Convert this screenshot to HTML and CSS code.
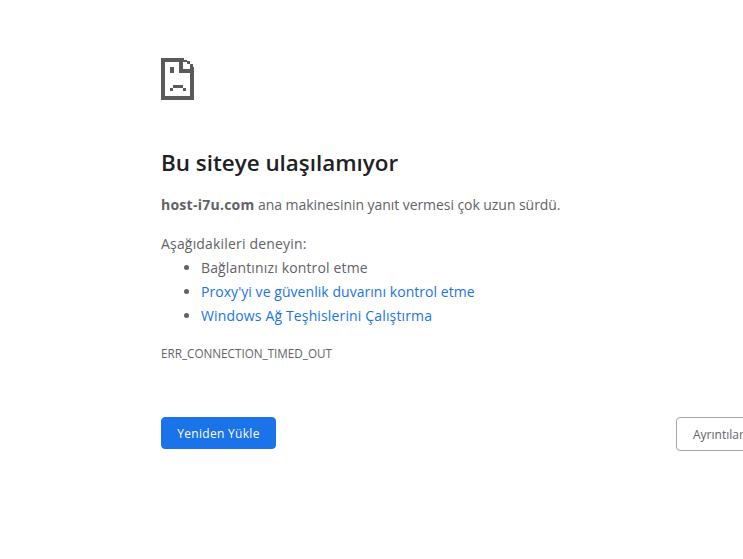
FILE: index.html
```html
<!DOCTYPE html>
<html lang="tr">
<head>
<meta charset="utf-8">
<title>host-i7u.com</title>
<link rel="stylesheet" href="styles.css">
</head>
<body>
<main class="wrapper">
  <svg class="icon" width="33" height="42" viewBox="0 0 33 42" shape-rendering="crispEdges" aria-hidden="true">
    <path fill="#5a5a5a" d="M0 0H23V4H0ZM0 4H4V38H0ZM0 38H33V42H0ZM29 9H33V38H29ZM18 4H22V11H29V15H18ZM23 2H26V4H23ZM26 3H29V6H26ZM29 6H32V9H29ZM9 9H13V15H9ZM12 27H22V30H12ZM9 30H12V33H9ZM22 30H25V33H22Z"/>
  </svg>
  <h1 class="title">Bu siteye ulaşılamıyor</h1>
  <p class="summary"><strong>host-i7u.com</strong> ana makinesinin yanıt vermesi çok uzun sürdü.</p>
  <p class="try">Aşağıdakileri deneyin:</p>
  <ul class="suggestions">
    <li>Bağlantınızı kontrol etme</li>
    <li><a class="proxy" href="#">Proxy'yi ve güvenlik duvarını kontrol etme</a></li>
    <li><a href="#">Windows Ağ Teşhislerini Çalıştırma</a></li>
  </ul>
  <div class="code">ERR_CONNECTION_TIMED_OUT</div>
  <div class="buttons">
    <button class="btn primary" type="button">Yeniden Yükle</button>
    <button class="btn secondary" type="button">Ayrıntılar</button>
  </div>
</main>
</body>
</html>
```
FILE: styles.css
```css
html, body {
  margin: 0;
  height: 100%;
  overflow: hidden;
  background: #fff;
}
body {
  font-family: "Open Sans", "Noto Sans", sans-serif;
  font-size: 14px;
  color: #5f6368;
}
.wrapper {
  width: 600px;
  margin-left: 161px;
  padding-top: 58px;
}
.icon {
  display: block;
}
.title {
  margin: 49px 0 0;
  font-size: 22.4px;
  line-height: 28px;
  font-weight: 600;
  color: #202124;
}
.summary {
  margin: 16px 0 0;
  line-height: 24px;
  font-size: 14px;
  letter-spacing: -0.06px;
  color: #5f6368;
}
.summary strong {
  font-weight: 700;
  letter-spacing: 0.25px;
}
.try {
  margin: 15px 0 0;
  line-height: 24px;
  letter-spacing: 0.18px;
}
.suggestions {
  margin: 0;
  padding-left: 40px;
  line-height: 24px;
  letter-spacing: 0.15px;
}
.suggestions a {
  color: #1a73e8;
  text-decoration: none;
}
.suggestions .proxy {
  letter-spacing: 0.05px;
}
.code {
  margin-top: 16px;
  font-size: 11.7px;
  line-height: 18px;
  color: #5f6368;
}
.buttons {
  display: flex;
  justify-content: space-between;
  align-items: flex-start;
  margin-top: 55px;
}
.btn {
  font-family: inherit;
  font-size: 12px;
  border-radius: 4px;
  box-sizing: border-box;
  padding: 0;
}
.primary {
  width: 115px;
  height: 32px;
  background: #1a73e8;
  border: 1px solid #1a73e8;
  color: #fff;
  letter-spacing: 0.3px;
}
.secondary {
  width: 85px;
  height: 34px;
  background: #fff;
  border: 1px solid #a6a6a6;
  color: #5f6368;
  text-align: left;
  padding-left: 16px;
}
```
